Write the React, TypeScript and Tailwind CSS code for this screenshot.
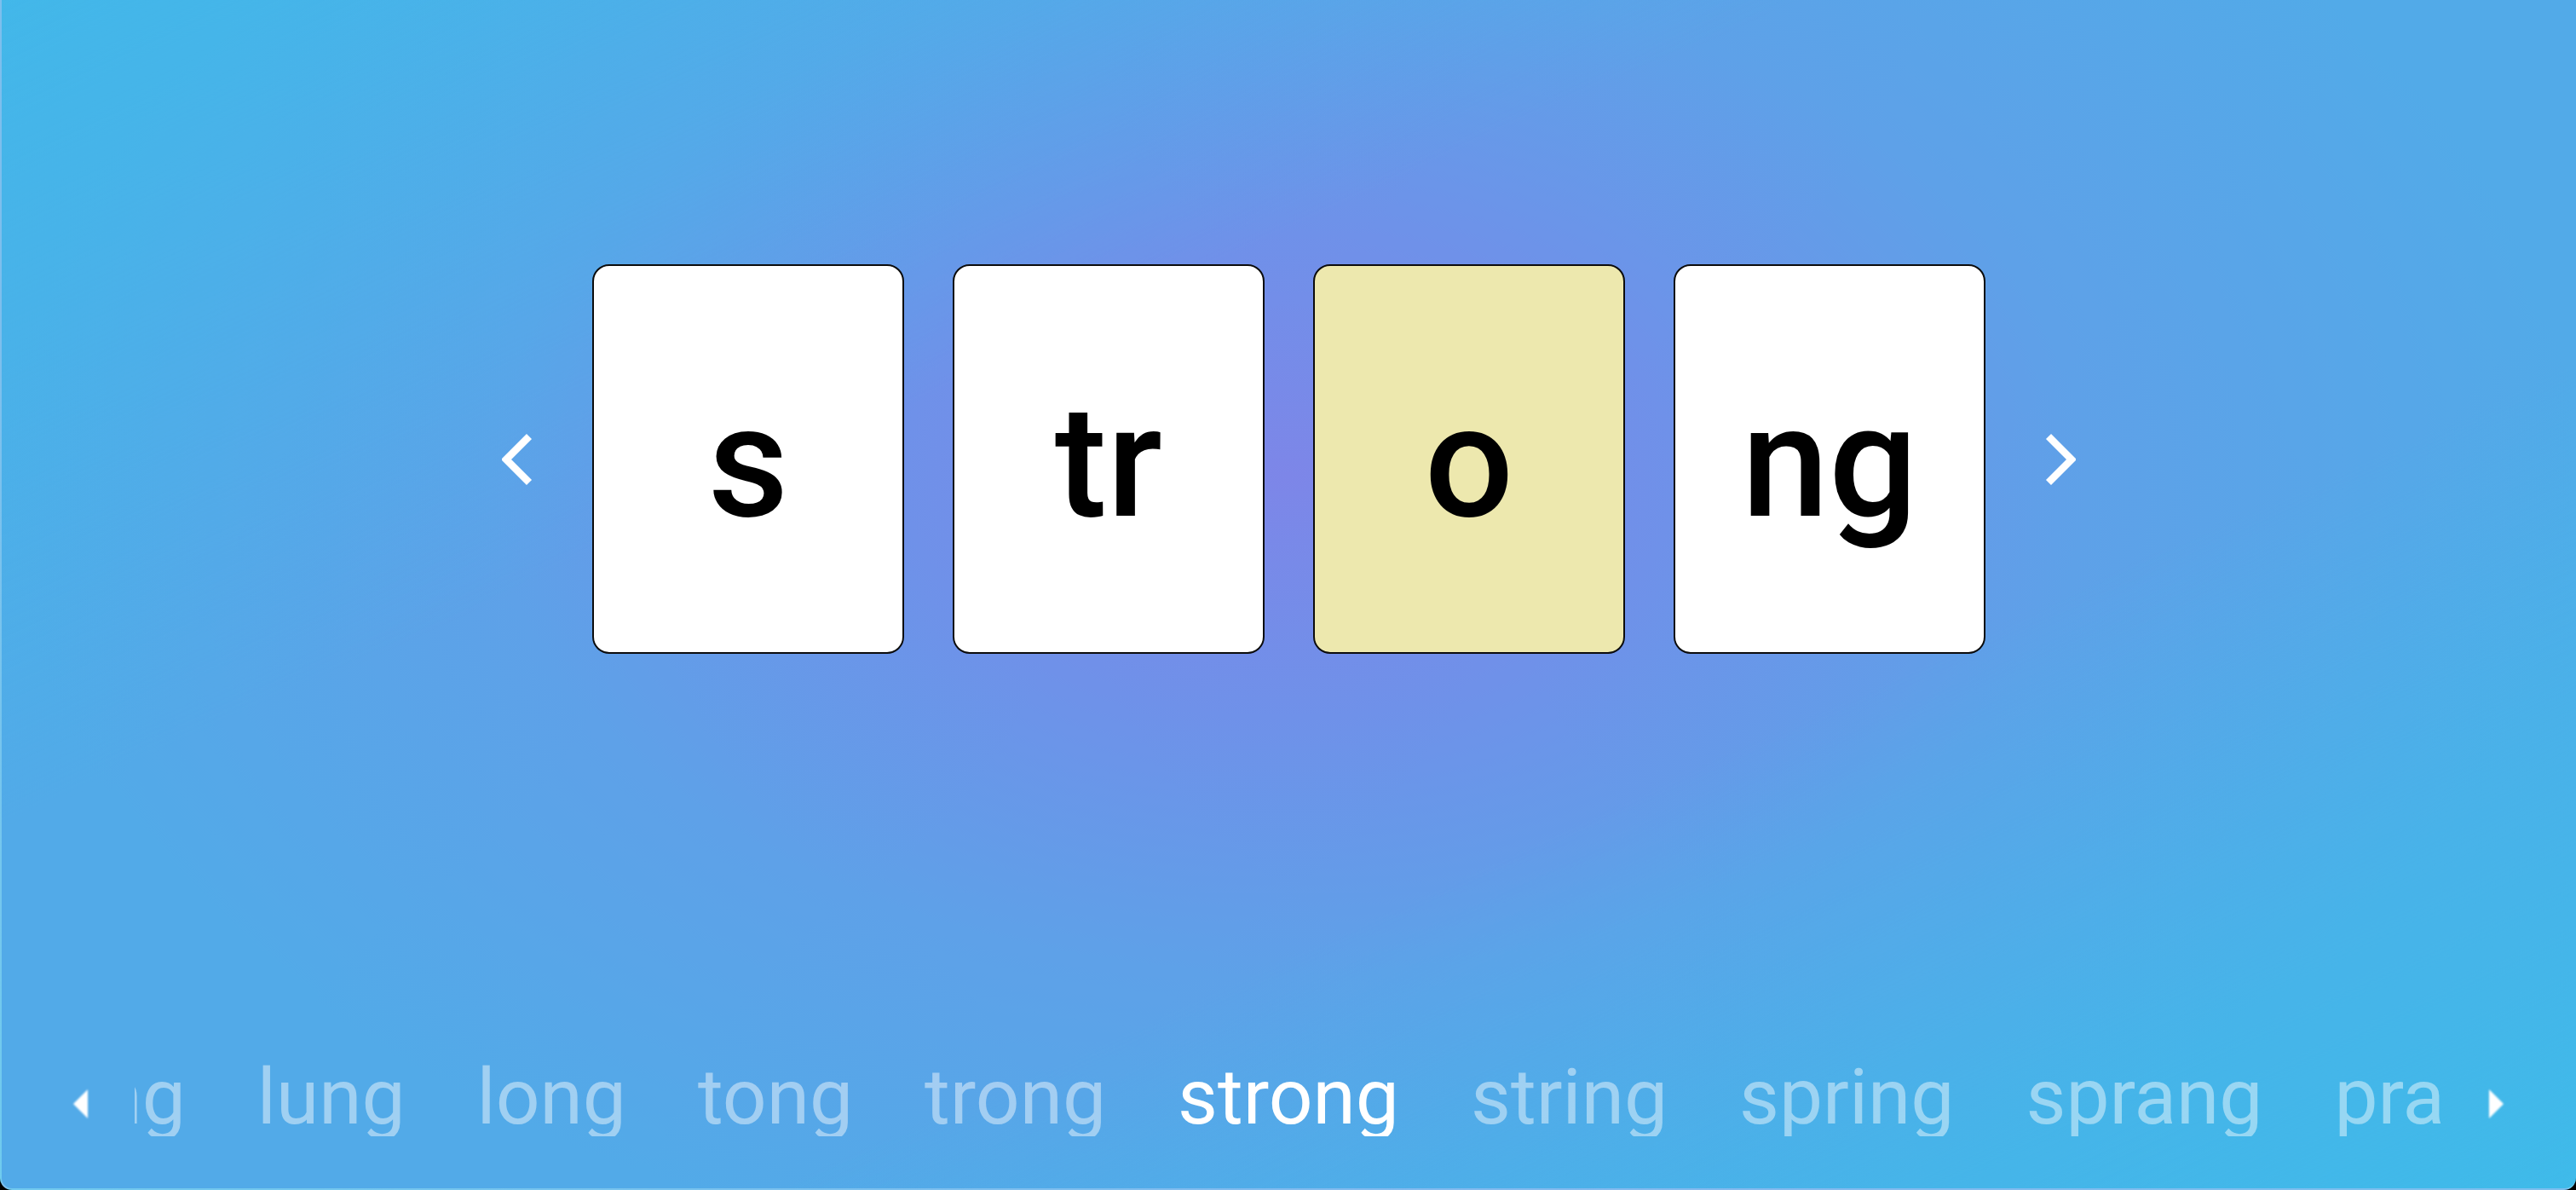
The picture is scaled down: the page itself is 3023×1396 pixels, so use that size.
import React from 'react'

const parts = [
  { text: 's', active: false },
  { text: 'tr', active: false },
  { text: 'o', active: true },
  { text: 'ng', active: false },
]

const before = ['prong', 'ling', 'lung', 'long', 'tong', 'trong']
const after = ['string', 'spring', 'sprang', 'prang', 'prong']

function Chevron({ dir }: { dir: 'left' | 'right' }) {
  const points = dir === 'left' ? '32,5 5,32 32,59' : '4,5 31,32 4,59'
  return (
    <svg width="36" height="64" viewBox="0 0 36 64" className="shrink-0 blur-[0.6px]">
      <polyline points={points} fill="none" stroke="white" strokeWidth="8.5" strokeLinejoin="miter" />
    </svg>
  )
}

function Triangle({ dir }: { dir: 'left' | 'right' }) {
  const points = dir === 'left' ? '17,0 0,17 17,34' : '0,0 17,17 0,34'
  return (
    <svg width="17" height="34" viewBox="0 0 17 34" className="mt-[15px] shrink-0 blur-[0.8px]">
      <polygon points={points} fill="white" />
    </svg>
  )
}

export default function App() {
  return (
    <div className="h-[1396px] w-full bg-black">
      <div className="flex h-full flex-col rounded-b-[14px] border-b-2 border-l-2 border-white/25 bg-[image:linear-gradient(to_bottom_right,rgba(56,192,234,0.6)_0%,rgba(56,192,234,0)_35%,rgba(56,192,234,0)_65%,rgba(56,192,234,0.75)_100%),radial-gradient(ellipse_50%_68%_at_50%_40%,#7d86e8_0%,#6f91e9_30%,#5ea1e8_62%,#52aae8_100%)] font-['Roboto',sans-serif]">
        {/* word cards */}
        <div className="flex items-center justify-center gap-[70px] pt-[310px]">
          <Chevron dir="left" />
          <div className="flex gap-[57px]">
            {parts.map((p) => (
              <div
                key={p.text}
                className={`flex h-[457px] w-[366px] items-center justify-center rounded-[20px] border-2 border-[#0c0c0c] pt-[6px] ${
                  p.active ? 'bg-[#ede8ae]' : 'bg-white'
                }`}
              >
                <span className="text-[184px] font-medium leading-none text-black">{p.text}</span>
              </div>
            ))}
          </div>
          <Chevron dir="right" />
        </div>

        {/* word strip */}
        <div className="mt-auto flex items-center gap-[55px] pb-[61px] pl-[84px] pr-[85px]">
          <Triangle dir="left" />
          <div className="flex min-w-0 flex-1 gap-[84px] overflow-hidden text-[91px] leading-none">
            <div className="flex min-w-0 flex-1 basis-0 justify-end gap-[84px] overflow-hidden">
              {before.map((w) => (
                <span key={w} className="shrink-0 text-white/45">{w}</span>
              ))}
            </div>
            <span className="shrink-0 text-white">strong</span>
            <div className="flex min-w-0 flex-1 basis-0 gap-[84px] overflow-hidden">
              {after.map((w) => (
                <span key={w} className="shrink-0 text-white/45">{w}</span>
              ))}
            </div>
          </div>
          <Triangle dir="right" />
        </div>
      </div>
    </div>
  )
}
